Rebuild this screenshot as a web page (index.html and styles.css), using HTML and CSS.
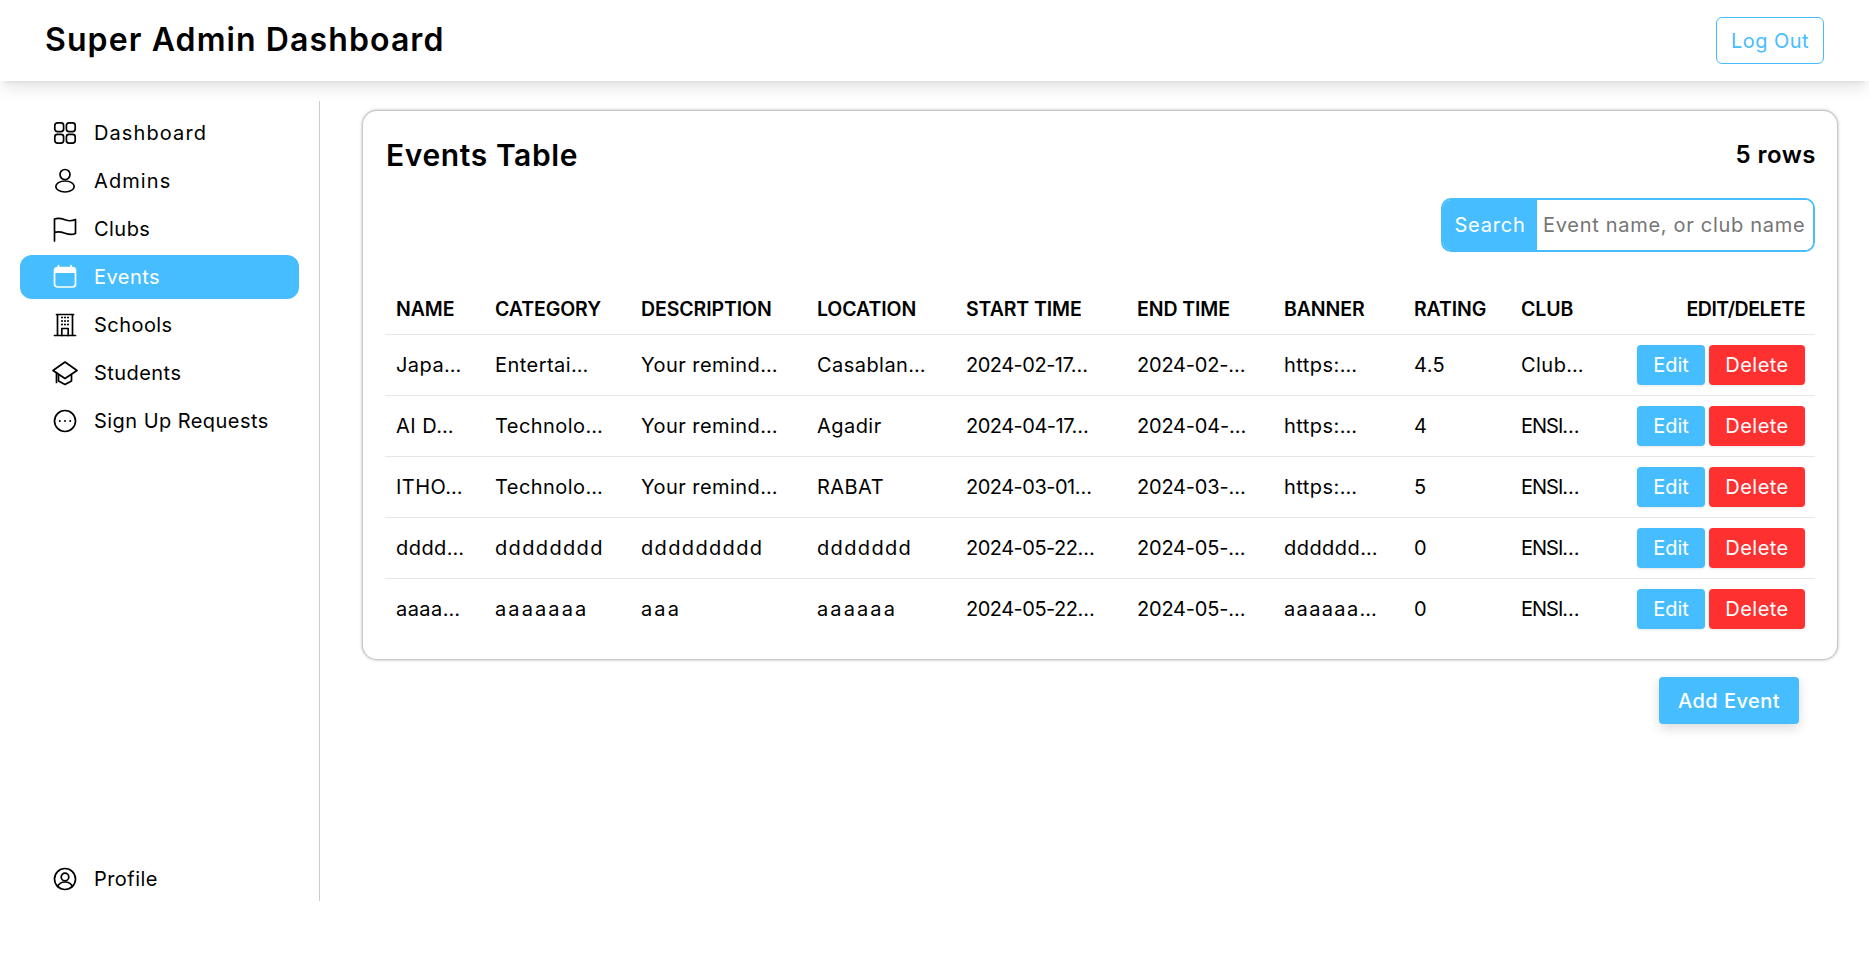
FILE: index.html
```html
<!DOCTYPE html>
<html lang="en">
<head>
<meta charset="utf-8">
<title>Super Admin Dashboard</title>
<link rel="stylesheet" href="styles.css">
</head>
<body>
<header class="topbar">
  <h1 class="brand">Super Admin Dashboard</h1>
  <button class="logout">Log Out</button>
</header>
<div class="layout">
  <aside class="sidebar">
    <nav class="nav">
      <a class="nav-item nav-wide"><svg class="icon" viewBox="0 0 24 24"><rect x="1.800" y="1.800" width="8.800" height="8.800" rx="2.600"/><rect x="13.400" y="1.800" width="8.800" height="8.800" rx="2.600"/><rect x="1.800" y="13.400" width="8.800" height="8.800" rx="2.600"/><rect x="13.400" y="13.400" width="8.800" height="8.800" rx="2.600"/></svg><span>Dashboard</span></a>
      <a class="nav-item nav-wide"><svg class="icon" viewBox="0 0 24 24"><circle cx="12" cy="5.500" r="5"/><ellipse cx="12" cy="17.500" rx="9.200" ry="5.500"/></svg><span>Admins</span></a>
      <a class="nav-item"><svg class="icon" viewBox="0 0 24 24"><path d="M1.500 24V2c4-1.500 7-.5 10.500.8s6.500 1.500 10.500-.3v14c-4 1.800-7 1-10.500-.3s-6.500-2.300-10.500-.8"/></svg><span>Clubs</span></a>
      <a class="nav-item active"><svg class="icon" viewBox="0 0 24 24"><rect x="1.500" y="2.500" width="21" height="19.500" rx="3"/><path class="cal-head" d="M2 8V5a2 2 0 0 1 2-2h16a2 2 0 0 1 2 2v3z"/><path d="M5.500 .5v3M18 .5v3"/></svg><span>Events</span></a>
      <a class="nav-item"><svg class="icon" viewBox="0 0 24 24"><path d="M1.500 22.500h21M4.500 22.500V1.500h15v21M3.500 1.500h17"/><path d="M8.800 22.500v-7h6.400v7"/><path class="dots" d="M8 4.500h2M11 4.500h2M14 4.500h2M8 8h2M11 8h2M14 8h2M8 11.500h2M11 11.500h2M14 11.500h2"/></svg><span>Schools</span></a>
      <a class="nav-item"><svg class="icon" viewBox="0 0 24 24"><path d="M12 1 0 9.500l12 8 12-8z"/><path d="M5.500 13.500V20l6.500 3.500 6.500-3.500v-6.500"/><path d="M3.500 11.500v10"/></svg><span>Students</span></a>
      <a class="nav-item"><svg class="icon" viewBox="0 0 24 24"><circle cx="12" cy="12" r="10.500"/><path class="dots-r" d="M6.800 12h.01M12 12h.01M17.200 12h.01"/></svg><span>Sign Up Requests</span></a>
    </nav>
    <a class="nav-item"><svg class="icon" viewBox="0 0 24 24"><circle cx="12" cy="12" r="10.500"/><circle cx="12" cy="10" r="3.800"/><path d="M4.500 19.500c1.500-3 4.500-4.500 7.500-4.500s6 1.500 7.500 4.500"/></svg><span>Profile</span></a>
  </aside>
  <main class="content">
    <section class="card">
      <div class="card-head">
        <h2 class="card-title">Events Table</h2>
        <span class="row-count">5 rows</span>
      </div>
      <div class="search-row">
        <div class="search">
          <span class="search-label">Search</span>
          <input class="search-input" type="text" placeholder="Event name, or club name">
        </div>
      </div>
      <table class="events">
        <colgroup>
          <col class="c1"><col class="c2"><col class="c3"><col class="c4"><col class="c5"><col class="c6"><col class="c7"><col class="c8"><col class="c9"><col class="c10">
        </colgroup>
        <thead>
          <tr><th>NAME</th><th>CATEGORY</th><th>DESCRIPTION</th><th>LOCATION</th><th>START TIME</th><th>END TIME</th><th>BANNER</th><th>RATING</th><th>CLUB</th><th class="right">EDIT/DELETE</th></tr>
        </thead>
        <tbody>
          <tr><td>Japa…</td><td>Entertai…</td><td>Your remind…</td><td>Casablan…</td><td class="start">2024-02-17…</td><td class="time">2024-02-…</td><td>https:…</td><td>4.5</td><td>Club…</td><td class="actions"><button class="btn edit">Edit</button><button class="btn del">Delete</button></td></tr>
          <tr><td>AI D…</td><td>Technolo…</td><td>Your remind…</td><td>Agadir</td><td class="start">2024-04-17…</td><td class="time">2024-04-…</td><td>https:…</td><td>4</td><td class="tight">ENSI…</td><td class="actions"><button class="btn edit">Edit</button><button class="btn del">Delete</button></td></tr>
          <tr><td>ITHO…</td><td>Technolo…</td><td>Your remind…</td><td>RABAT</td><td class="start">2024-03-01…</td><td class="time">2024-03-…</td><td>https:…</td><td>5</td><td class="tight">ENSI…</td><td class="actions"><button class="btn edit">Edit</button><button class="btn del">Delete</button></td></tr>
          <tr><td>dddd…</td><td class="wide-d">dddddddd</td><td class="wide-d">ddddddddd</td><td class="wide-d">ddddddd</td><td class="start">2024-05-22…</td><td class="time">2024-05-…</td><td>dddddd…</td><td>0</td><td class="tight">ENSI…</td><td class="actions"><button class="btn edit">Edit</button><button class="btn del">Delete</button></td></tr>
          <tr><td>aaaa…</td><td class="wide-a">aaaaaaa</td><td class="wide-a">aaa</td><td class="wide-a">aaaaaa</td><td class="start">2024-05-22…</td><td class="time">2024-05-…</td><td class="wide-d">aaaaaa…</td><td>0</td><td class="tight">ENSI…</td><td class="actions"><button class="btn edit">Edit</button><button class="btn del">Delete</button></td></tr>
        </tbody>
      </table>
    </section>
    <div class="add-row"><button class="add">Add Event</button></div>
  </main>
</div>
</body>
</html>
```
FILE: styles.css
```css
* { box-sizing: border-box; }
html, body { margin: 0; padding: 0; }
body { font-family: Inter, "Liberation Sans", sans-serif; font-size: 20px; color: #000; background: #fff; letter-spacing: .45px; overflow: hidden; }
button, input { font-family: inherit; letter-spacing: inherit; }

.topbar { height: 81px; display: flex; align-items: center; justify-content: space-between; padding: 0 45px; background: #fff; box-shadow: 0 10px 15px -3px rgba(0,0,0,.1), 0 4px 6px -4px rgba(0,0,0,.1); position: relative; }
.brand { margin: 0 0 2px; font-size: 32px; font-weight: 600; letter-spacing: 1.1px; }
.logout { width: 108px; height: 47px; background: #fff; border: 1px solid #45bdff; border-radius: 6px; color: #45bdff; font-size: 20px; }

.layout { display: flex; padding-top: 20px; }
.sidebar { width: 320px; height: 800px; flex: none; border-right: 1px solid #ccc; padding: 10px 20px 0; display: flex; flex-direction: column; justify-content: space-between; }
.nav { display: flex; flex-direction: column; gap: 4px; }
.nav-item { display: flex; align-items: center; gap: 17px; height: 44px; width: 279px; padding-left: 33px; border-radius: 12px; color: #000; }
.nav-wide { letter-spacing: 1.1px; }
.nav-item.active { background: #45bdff; color: #fff; }
.icon { width: 24px; height: 24px; flex: none; fill: none; stroke: currentColor; stroke-width: 1.7; stroke-linecap: round; stroke-linejoin: round; overflow: visible; }
.cal-head { fill: currentColor; stroke: none; }
.dots { stroke-width: 1.5; stroke-linecap: butt; }
.dots-r { stroke-width: 2; }

.content { flex: 1; padding: 10px 32px 0 43px; }
.card { height: 548px; border-radius: 14px; background: #fff; box-shadow: 0 0 0 1px #c8c8c8, 0 0 3px 1px rgba(0,0,0,.3); padding: 21px 22px 0; }
.card-head { display: flex; align-items: center; justify-content: space-between; height: 45px; }
.card-title { margin: 0 0 0 1px; font-size: 30px; font-weight: 600; letter-spacing: .6px; }
.row-count { margin-right: -1px; font-size: 24px; font-weight: 600; }
.search-row { display: flex; justify-content: flex-end; margin-top: 21px; }
.search { display: flex; width: 374px; height: 54px; border: 2px solid #45bdff; border-radius: 10px; overflow: hidden; letter-spacing: .7px; }
.search-label { width: 94px; flex: none; background: #45bdff; color: #fff; display: flex; align-items: center; justify-content: center; letter-spacing: .8px; }
.search-input { flex: 1; min-width: 0; border: 0; outline: 0; padding: 0 6px; font-size: 20px; background: #fff; }
.search-input::placeholder { color: #757575; opacity: 1; }

.events { width: 1430px; table-layout: fixed; border-collapse: collapse; margin-top: 32px; }
.c1 { width: 99px; } .c2 { width: 146px; } .c3 { width: 176px; } .c4 { width: 149px; } .c5 { width: 171px; }
.c6 { width: 147px; } .c7 { width: 130px; } .c8 { width: 107px; } .c9 { width: 116px; } .c10 { width: 189px; }
.events th { height: 50px; padding: 0 11px; text-align: left; font-size: 19.5px; font-weight: 600; letter-spacing: -.1px; white-space: nowrap; }
.events th.right { text-align: right; padding-right: 10px; letter-spacing: -.5px; }
.events thead tr { border-bottom: 1px solid #e5e7eb; }
.events td { height: 61px; padding: 0 11px; white-space: nowrap; }
.events td.start { letter-spacing: -.5px; }
.events td.time { letter-spacing: -.2px; }
.events td.tight { letter-spacing: -1px; }
.events td.wide-d { letter-spacing: 1.35px; }
.events td.wide-a { letter-spacing: 2.1px; }
.events tbody tr { border-bottom: 1px solid #e5e7eb; }
.events tbody tr:last-child { border-bottom: 0; }
.events td.actions { padding: 0 10px 0 11px; text-align: right; font-size: 0; }
.btn { height: 40px; border: 0; border-radius: 4px; color: #fff; font-size: 20px; box-shadow: 0 1px 3px rgba(0,0,0,.1); padding: 0; }
.edit { width: 68px; background: #45bdff; margin-right: 4px; letter-spacing: 0; }
.del { width: 96px; background: #ff3030; }

.add-row { display: flex; justify-content: flex-end; margin-top: 18px; padding-right: 38px; }
.add { width: 140px; height: 47px; border: 0; border-radius: 4px; background: #45bdff; color: #fff; font-size: 20px; font-weight: 500; box-shadow: 0 4px 12px rgba(0,0,0,.15); }
```
